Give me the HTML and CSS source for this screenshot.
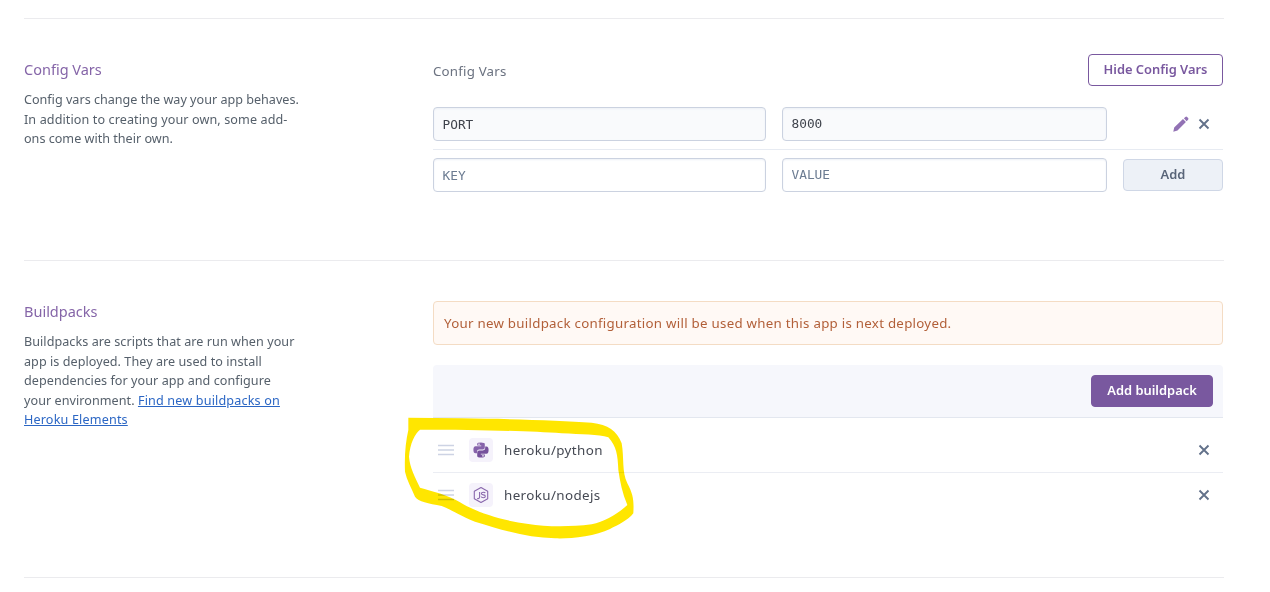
FILE: index.html
```html
<!DOCTYPE html>
<html lang="en">
<head>
<meta charset="utf-8">
<title>Settings</title>
<link rel="stylesheet" href="styles.css">
</head>
<body>
<main class="page">
  <section class="section config">
    <div class="info">
      <h2>Config Vars</h2>
      <p>Config vars change the way your app behaves.<br><span class="loose">In addition to creating your own, some add-</span><br>ons come with their own.</p>
    </div>
    <div class="content">
      <div class="toolbar"><span class="label">Config Vars</span><button class="btn outline">Hide Config Vars</button></div>
      <div class="row saved">
        <input class="field key" value="PORT" readonly>
        <input class="field value" value="8000" readonly>
        <div class="actions">
          <svg class="pencil" viewBox="0 0 16 16"><path d="M.3 15.7 1.2 11.5 10 3.1 12.9 6 4.5 14.4ZM10.9 2.3 12.4.9q.8-.8 1.7.1l1 1q.8.9 0 1.7l-1.5 1.5Z"/></svg>
          <svg class="cross" viewBox="0 0 12 12"><path d="M1.5 1.5 10.5 10.5M10.5 1.5 1.5 10.5"/></svg>
        </div>
      </div>
      <div class="row">
        <input class="field key" placeholder="KEY">
        <input class="field value" placeholder="VALUE">
        <button class="btn add">Add</button>
      </div>
    </div>
  </section>
  <section class="section buildpacks">
    <div class="info">
      <h2>Buildpacks</h2>
      <p>Buildpacks are scripts that are run when your<br>app is deployed. They are used to install<br>dependencies for your app and configure<br>your environment. <a href="#">Find new buildpacks on<br>Heroku Elements</a></p>
    </div>
    <div class="content">
      <div class="notice"><span>Your new buildpack configuration will be used when this app is next deployed.</span></div>
      <div class="panel"><button class="btn primary">Add buildpack</button></div>
      <ul class="packs">
        <li>
          <svg class="grip" viewBox="0 0 16 12"><path d="M0 1.5H16M0 6H16M0 10.5H16"/></svg>
          <span class="tile"><svg viewBox="0 0 16 16"><path fill="#8662aa" fill-rule="evenodd" d="M4.2 3V1.7Q4.2.4 8 .4T11.8 1.9V5.4Q11.8 7.4 9.8 7.4H6.1Q4 7.4 4 9.5V11.3H2.5Q.4 11.3.4 7.8T2.5 4.2H8.2V3.6H4.2ZM6 1.4a.75.75 0 1 0 .01 0Z"/><path fill="#76519c" fill-rule="evenodd" d="M11.8 13v1.3Q11.8 15.6 8 15.6T4.2 14.1V10.6Q4.2 8.4 6.2 8.4H9.9Q12.2 8.4 12.2 6.3V4.6H13.5Q15.6 4.6 15.6 8.1T13.5 11.8H7.8V12.4H11.8ZM10 13.1a.75.75 0 1 0 .01 0Z"/></svg></span>
          <span class="name">heroku/python</span>
          <svg class="cross" viewBox="0 0 12 12"><path d="M1.5 1.5 10.5 10.5M10.5 1.5 1.5 10.5"/></svg>
        </li>
        <li>
          <svg class="grip" viewBox="0 0 16 12"><path d="M0 1.5H16M0 6H16M0 10.5H16"/></svg>
          <span class="tile"><svg viewBox="0 0 16 16"><g fill="none" stroke="#8967ac" stroke-width="1.1"><path d="M8 .6 14.7 4.3V11.7L8 15.4 1.3 11.7V4.3Z" stroke-linejoin="round"/><path d="M6.6 5V10Q6.6 11.6 5.2 11.6H4.2M12.3 6Q11.9 5.2 10.3 5.2 8.4 5.2 8.4 6.5 8.4 7.7 10.3 7.9 12.3 8.1 12.3 9.3 12.3 10.7 10.3 10.7 8.4 10.7 8.2 9.5"/></g></svg></span>
          <span class="name">heroku/nodejs</span>
          <svg class="cross" viewBox="0 0 12 12"><path d="M1.5 1.5 10.5 10.5M10.5 1.5 1.5 10.5"/></svg>
        </li>
      </ul>
    </div>
  </section>
  <div class="end"></div>
</main>
<svg class="marker" viewBox="0 0 750 435"><path fill-rule="evenodd" d="M40 38 200 40C350 42 500 46 590 53 640 60 665 75 680 115 688 160 680 200 697 235 715 270 717 285 715 325 700 345 670 360 645 372 600 395 520 402 480 400 400 398 330 378 240 350 190 330 165 312 140 303 100 295 70 290 60 275 50 250 35 225 30 200 28 150 32 110 40 75ZM75 74C250 74 400 78 500 85 560 88 610 88 640 97 665 125 668 150 670 195 675 230 682 265 697 300 670 325 630 350 590 358 520 367 450 365 400 357 320 347 240 320 195 292 160 270 110 258 75 248 60 215 45 190 42 155 45 115 60 85 75 74Z"/></svg>
</body>
</html>
```
FILE: styles.css
```css
* { box-sizing: border-box; }
body { margin: 0; height: 592px; overflow: hidden; background: #fff; font-family: "Noto Sans", sans-serif; color: #596981; }
.page { width: 1200px; margin: 18px 0 0 24px; }
.section { display: flex; border-top: 1px solid #ebebee; }
.config { height: 242px; padding-top: 35px; }
.buildpacks { height: 317px; padding-top: 40px; }
.end { border-top: 1px solid #ebebee; }
.info { width: 409px; flex: none; }
.config .info { padding-top: 5px; }
h2 { margin: -1px 0 0; font-size: 14.5px; line-height: 22px; font-weight: 400; color: #8565a8; }
.info p { margin: 10px 0 0; font-size: 12.6px; line-height: 19.5px; color: #56606b; white-space: nowrap; }
.buildpacks .info p { letter-spacing: .05px; }
.info .loose { letter-spacing: .1px; }
.info a { color: #2b66c4; text-underline-offset: 1px; letter-spacing: .16px; }
.content { width: 790px; flex: none; }
.toolbar { display: flex; justify-content: space-between; height: 45px; }
.label { font-size: 13.3px; line-height: 34px; letter-spacing: .2px; color: #6b7280; }
.btn { display: flex; align-items: center; justify-content: center; height: 32px; padding: 0 0 2px; border: 1px solid #79589f; border-radius: 4px; font: 600 12.9px "Noto Sans", sans-serif; white-space: nowrap; }
.outline { width: 135px; background: #fff; color: #79589f; }
.row { display: flex; align-items: center; height: 50px; }
.saved { height: 51px; border-bottom: 1px solid #e7ebf2; }
.field { height: 34px; padding: 0 8.5px; border: 1px solid #cbd2e0; border-radius: 4px; box-shadow: inset 0 1px 2px #edf0f6; background: #fff; font: 12.8px "DejaVu Sans Mono", monospace; color: #3f434c; outline: 0; }
.saved .field { background: #f9fafc; }
.field::placeholder { color: #6c7c92; opacity: 1; }
.key { width: 333px; margin-right: 16px; }
.value { width: 325px; margin-right: 16px; padding-bottom: 2px; }
.actions { display: flex; flex: 1; align-items: center; justify-content: flex-end; gap: 9px; padding-right: 13px; }
.pencil { width: 16px; height: 16px; fill: #9272b4; }
.cross { width: 12px; height: 12px; fill: none; stroke: #62718a; stroke-width: 1.9; }
.add { width: 100px; background: #edf1f7; border-color: #cfd7e6; color: #596579; }
.notice { display: flex; align-items: center; height: 44px; padding-left: 10px; border: 1px solid #f4dcc4; border-radius: 4px; background: #fff9f5; color: #b25f38; font-size: 13.3px; letter-spacing: .27px; white-space: nowrap; }
.panel { display: flex; justify-content: flex-end; height: 53px; margin-top: 20px; padding: 10px; background: #f6f7fc; border-bottom: 1px solid #e3e7ef; border-radius: 4px 4px 0 0; }
.primary { width: 122px; background: #79589f; color: #fff; }
.packs { margin: 0; padding: 10px 0 0; list-style: none; }
.packs li { display: flex; align-items: center; height: 45px; padding: 0 13px 0 5px; }
.packs li:first-child { border-bottom: 1px solid #ebedf3; }
.packs li:last-child { height: 44px; }
.grip { width: 16px; height: 12px; margin-right: 15px; fill: none; stroke: #cdd3e4; stroke-width: 1.5; }
.tile { display: flex; align-items: center; justify-content: center; width: 24px; height: 24px; margin-right: 11px; border-radius: 4px; background: #f5f2fb; }
.tile svg { width: 16px; height: 16px; }
.name { flex: 1; padding-bottom: 1px; font-size: 13.4px; letter-spacing: .38px; color: #454953; }
.marker { position: absolute; left: 395px; top: 405px; width: 250px; height: 145px; fill: #ffe600; mix-blend-mode: multiply; pointer-events: none; }
```
